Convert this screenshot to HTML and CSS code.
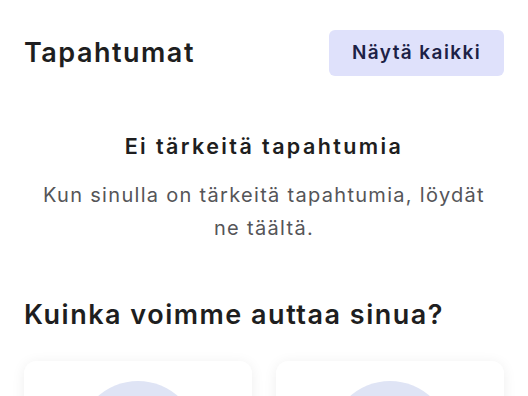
FILE: index.html
```html
<!DOCTYPE html>
<html>
    <head>
        <meta name="viewport" content="width=device-width, initial-scale=1" />
        <title>Etusivu</title>
        <link rel="stylesheet" href="styles.css">
    </head>
    <body>
        <div id="page">
            <div class="section">
                <div class="sectionhead">
                    <h2 class="heading">Tapahtumat</h2>
                    <a class="button" href="#">Näytä kaikki</a>
                </div>
                <div class="empty">
                    <h3 class="emptytitle">Ei tärkeitä tapahtumia</h3>
                    <p class="emptytext">Kun sinulla on tärkeitä tapahtumia, löydät ne täältä.</p>
                </div>
            </div>
            <div class="section">
                <h2 class="heading">Kuinka voimme auttaa sinua?</h2>
                <div class="cards">
                    <a class="card" href="#"><div class="circle"></div></a>
                    <a class="card" href="#"><div class="circle"></div></a>
                </div>
            </div>
        </div>
    </body>
</html>
```

FILE: styles.css
```css
body {
    margin: 0px;
    background: #ffffff;
    font-family: Inter, "DejaVu Sans", sans-serif;
    color: #1e1e20;
}
#page {
    padding: 30px 24px 24px 24px;
}
.sectionhead {
    display: flex;
    justify-content: space-between;
    align-items: center;
}
.heading {
    margin: 0px;
    font-size: 27px;
    font-weight: 600;
    line-height: 34px;
    letter-spacing: 1.5px;
}
.button {
    display: inline-block;
    box-sizing: border-box;
    width: 175px;
    text-align: center;
    background: #dfe1fb;
    color: #1d2146;
    text-decoration: none;
    font-size: 19px;
    font-weight: 600;
    letter-spacing: 1.4px;
    height: 46px;
    line-height: 46px;
    border-radius: 6px;
}
.empty {
    text-align: center;
    padding: 56px 0px 53px 0px;
}
.emptytitle {
    margin: 0px;
    font-size: 21.5px;
    font-weight: 600;
    line-height: 28px;
    letter-spacing: 2.4px;
}
.emptytext {
    margin: 19px 0px 0px 0px;
    padding: 0px 16px;
    color: #555558;
    font-size: 20px;
    line-height: 33px;
    letter-spacing: 1.3px;
}
.section + .section .heading {
    margin-bottom: 29px;
}
.cards {
    display: grid;
    grid-template-columns: 1fr 1fr;
    gap: 24px;
}
.card {
    display: flex;
    flex-direction: column;
    align-items: center;
    background: #ffffff;
    border-radius: 12px;
    box-shadow: 0px 2px 14px rgba(0, 0, 0, 0.07);
    padding: 20px 16px 40px 16px;
    text-decoration: none;
}
.circle {
    width: 120px;
    height: 120px;
    border-radius: 50%;
    background: #dfe4f5;
}
```
